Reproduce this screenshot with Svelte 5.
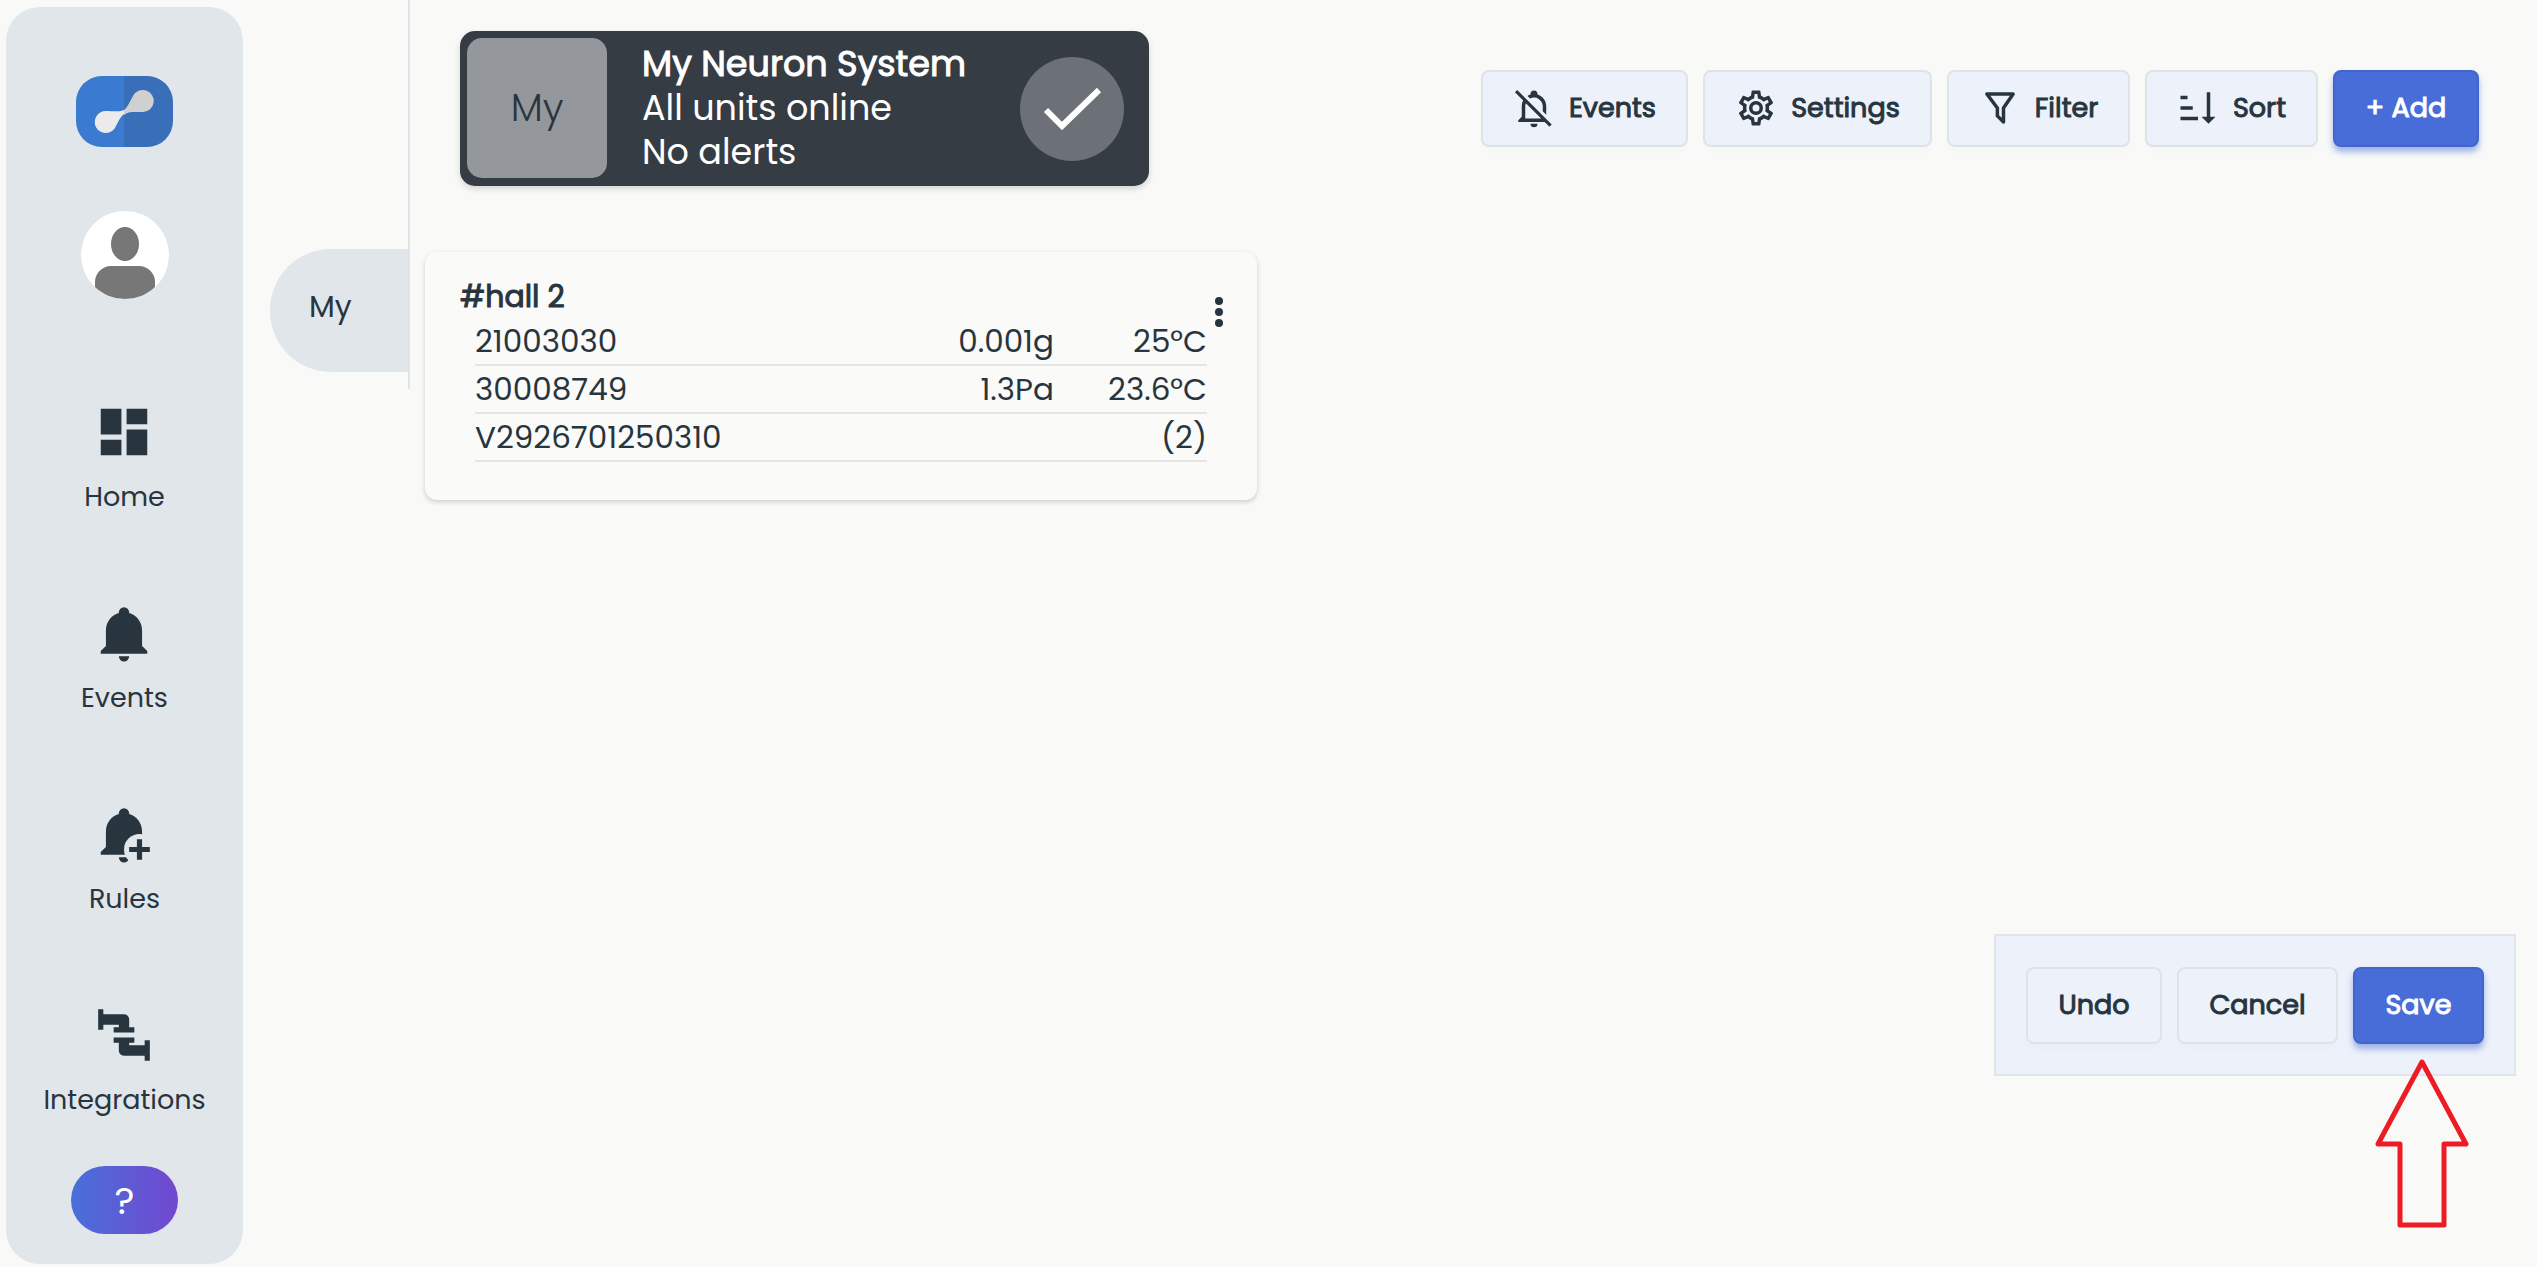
<script>
  const nav = [
    { id: 'home', label: 'Home' },
    { id: 'events', label: 'Events' },
    { id: 'rules', label: 'Rules' },
    { id: 'integrations', label: 'Integrations' }
  ];
  const units = [
    { id: '21003030', value: '0.001g', temp: '25°C' },
    { id: '30008749', value: '1.3Pa', temp: '23.6°C' },
    { id: 'V2926701250310', value: '', temp: '(2)' }
  ];
  const bell =
    'M21 19V20H3V19L5 17V11C5 7.9 7.03 5.17 10 4.29C10 4.19 10 4.1 10 4A2 2 0 0 1 12 2A2 2 0 0 1 14 4C14 4.1 14 4.19 14 4.29C16.97 5.17 19 7.9 19 11V17L21 19M14 21A2 2 0 0 1 12 23A2 2 0 0 1 10 21';
</script>

<div class="app">
  <aside class="sidebar">
    <a class="logo" href="#top" aria-label="Neuron">
      <svg viewBox="0 0 97 71">
        <defs><clipPath id="logo-shape"><rect width="97" height="71" rx="26" /></clipPath></defs>
        <g clip-path="url(#logo-shape)">
          <rect width="49" height="71" fill="#3a7ad0" />
          <rect x="48" width="49" height="71" fill="#396fb8" />
        </g>
        <path d="M48 34C44 36 38 35 30 35A11 11 0 1 0 39 52C42 46 44 41 48 38Z" fill="#ebebeb" />
        <path d="M48 34C52 31 54 25 57 20A11 11 0 1 1 67 36C58 36 52 35 48 39Z" fill="#d0d0d0" />
      </svg>
    </a>
    <button class="avatar" aria-label="Profile">
      <svg viewBox="0 0 88 88">
        <defs><clipPath id="face"><circle cx="44" cy="44" r="44" /></clipPath></defs>
        <g clip-path="url(#face)">
          <rect width="88" height="88" fill="#fff" />
          <ellipse cx="44" cy="33" rx="14" ry="17" fill="#777" />
          <rect x="14" y="55" width="60" height="46" rx="16" fill="#777" />
        </g>
      </svg>
    </button>
    <nav>
      {#each nav as item}
        <a href={'#' + item.id}>
          <svg viewBox="0 0 24 24" fill="currentColor" aria-hidden="true">
            {#if item.id === 'home'}
              <path d="M3 13h8V3H3v10zm0 8h8v-6H3v6zm10 0h8V11h-8v10zm0-18v6h8V3h-8z" />
            {:else if item.id === 'events'}
              <path d={bell} />
            {:else if item.id === 'rules'}
              <path d={bell} />
              <circle cx="18" cy="18" r="6" fill="#e0e6ea" />
              <path d="M17 14h2v3h3v2h-3v3h-2v-3h-3v-2h3z" />
            {:else}
              <path d="M16 9V11H8V9H10V8H4V10H2V2H4V4H12C13.11 4 14 4.9 14 6V9H16M10 15V18C10 19.11 10.9 20 12 20H20V22H22V14H20V16H14V15H16V13H8V15H10Z" />
            {/if}
          </svg>
          <span>{item.label}</span>
        </a>
      {/each}
    </nav>
    <button class="help">?</button>
  </aside>

  <div class="tabs"><a class="tab" href="#my">My</a></div>

  <main>
    <header>
      <section class="status">
        <div class="badge">My</div>
        <div class="lines">
          <strong>My Neuron System</strong>
          <span>All units online</span>
          <span>No alerts</span>
        </div>
        <svg class="ok" viewBox="0 0 105 105" aria-hidden="true">
          <circle cx="53" cy="53" r="52" fill="#6c7077" />
          <path d="M27 54L43 70L80 34" fill="none" stroke="#fff" stroke-width="6" />
        </svg>
      </section>
      <div class="toolbar">
        <button class="btn events">
          <svg viewBox="0 0 24 24" fill="currentColor" aria-hidden="true">
            <path d="M22.11 21.46L2.39 1.73L1.11 3L5.83 7.72C5.29 8.73 5 9.86 5 11V17L3 19V20H18.11L20.84 22.73L22.11 21.46M7 18V11C7 10.39 7.11 9.79 7.34 9.23L16.11 18H7M10 21H14A2 2 0 0 1 10 21M8.29 5.09C8.82 4.75 9.4 4.48 10 4.29V4A2 2 0 0 1 14 4V4.29C16.97 5.17 19 7.9 19 11V15.8L17 13.8V11A5 5 0 0 0 9.78 6.57L8.29 5.09Z" />
          </svg>
          Events
        </button>
        <button class="btn settings">
          <svg viewBox="0 0 24 24" fill="currentColor" aria-hidden="true">
            <path d="M12 8A4 4 0 1 1 12 16A4 4 0 1 1 12 8M12 10A2 2 0 1 0 12 14A2 2 0 1 0 12 10M10 22C9.75 22 9.54 21.82 9.5 21.58L9.13 18.93C8.5 18.68 7.96 18.34 7.44 17.94L4.95 18.95C4.73 19.03 4.46 18.95 4.34 18.73L2.34 15.27C2.21 15.05 2.27 14.78 2.46 14.63L4.57 12.97L4.5 12L4.57 11L2.46 9.37C2.27 9.22 2.21 8.95 2.34 8.73L4.34 5.27C4.46 5.05 4.73 4.96 4.95 5.05L7.44 6.05C7.96 5.66 8.5 5.32 9.13 5.07L9.5 2.42C9.54 2.18 9.75 2 10 2H14C14.25 2 14.46 2.18 14.5 2.42L14.87 5.07C15.5 5.32 16.04 5.66 16.56 6.05L19.05 5.05C19.27 4.96 19.54 5.05 19.66 5.27L21.66 8.73C21.79 8.95 21.73 9.22 21.54 9.37L19.43 11L19.5 12L19.43 13L21.54 14.63C21.73 14.78 21.79 15.05 21.66 15.27L19.66 18.73C19.54 18.95 19.27 19.04 19.05 18.95L16.56 17.95C16.04 18.34 15.5 18.68 14.87 18.93L14.5 21.58C14.46 21.82 14.25 22 14 22H10M11.25 4L10.88 6.61C9.68 6.86 8.62 7.5 7.85 8.39L5.44 7.35L4.69 8.65L6.8 10.2C6.4 11.37 6.4 12.64 6.8 13.8L4.68 15.36L5.43 16.66L7.86 15.62C8.63 16.5 9.68 17.14 10.87 17.38L11.24 20H12.76L13.13 17.39C14.32 17.14 15.37 16.5 16.14 15.62L18.57 16.66L19.32 15.36L17.2 13.81C17.6 12.64 17.6 11.37 17.2 10.2L19.31 8.65L18.56 7.35L16.15 8.39C15.38 7.5 14.32 6.86 13.12 6.62L12.75 4H11.25Z" />
          </svg>
          Settings
        </button>
        <button class="btn filter">
          <svg viewBox="0 0 24 24" fill="none" stroke="currentColor" stroke-width="2" aria-hidden="true">
            <path d="M4.5 4H19.500L14 12V20L10.500 16.500V12Z" stroke-linejoin="round" />
          </svg>
          Filter
        </button>
        <button class="btn sort">
          <svg viewBox="0 0 24 24" fill="currentColor" aria-hidden="true">
            <path d="M2 5h4v2H2zM2 11h7v2H2zM2 17h10v2H2zM17 3h2v14h3l-4 4l-4-4h3z" />
          </svg>
          Sort
        </button>
        <button class="btn primary add">+ Add</button>
      </div>
    </header>

    <section class="card">
      <h2>#hall 2</h2>
      <button class="more" aria-label="More">
        <svg viewBox="0 0 10 32" fill="currentColor">
          <circle cx="5" cy="5" r="4" /><circle cx="5" cy="16" r="4" /><circle cx="5" cy="27" r="4" />
        </svg>
      </button>
      <table>
        <tbody>
          {#each units as unit}
            <tr>
              <td>{unit.id}</td>
              <td class="num">{unit.value}</td>
              <td class="num temp">{unit.temp}</td>
            </tr>
          {/each}
        </tbody>
      </table>
    </section>

    <div class="actions">
      <button class="btn undo">Undo</button>
      <button class="btn cancel">Cancel</button>
      <button class="btn primary save">Save</button>
      <svg class="arrow" viewBox="0 0 94 170" aria-hidden="true">
        <path d="M47 4L91 86H69V167H25V86H3Z" fill="none" stroke="#ed1c24" stroke-width="5" stroke-linejoin="round" />
      </svg>
    </div>
  </main>
</div>

<style>
  :global(body) {
    margin: 0;
    background: #f9faf8;
  }
  * {
    box-sizing: border-box;
  }
  .app {
    display: flex;
    min-height: 100vh;
    color: #28353e;
    font-family: Poppins, Inter, sans-serif;
    font-size: 27px;
    font-weight: 400;
  }
  svg {
    display: block;
  }
  a {
    color: inherit;
    text-decoration: none;
  }
  button {
    font: inherit;
    color: inherit;
    cursor: pointer;
  }
  .sidebar {
    flex: none;
    width: 237px;
    margin: 7px 0 3px 6px;
    padding: 69px 0 30px;
    border-radius: 34px;
    background: #e0e6ea;
    display: flex;
    flex-direction: column;
    align-items: center;
  }
  .logo svg {
    width: 97px;
    height: 71px;
  }
  .avatar {
    margin-top: 64px;
    padding: 0;
    border: 0;
    background: none;
  }
  .avatar svg {
    width: 88px;
    height: 88px;
  }
  nav {
    margin-top: 102px;
    display: flex;
    flex-direction: column;
    gap: 69px;
  }
  nav a {
    display: flex;
    flex-direction: column;
    align-items: center;
    gap: 14px;
    height: 132px;
    line-height: 40px;
  }
  nav svg {
    width: 62px;
    height: 62px;
  }
  .help {
    margin-top: auto;
    width: 107px;
    height: 68px;
    padding: 0;
    border: 0;
    border-radius: 34px;
    background: linear-gradient(90deg, #4870da, #7247d0);
    color: #fff;
    font-size: 38px;
  }
  .tabs {
    flex: none;
    width: 140px;
    height: 389px;
    margin-left: 27px;
    padding-top: 249px;
    border-right: 2px solid #e0e5ea;
  }
  .tab {
    display: flex;
    align-items: center;
    height: 123px;
    padding: 0 0 8px 39px;
    border-radius: 61px 0 0 61px;
    background: #e0e6ea;
    font-size: 30px;
  }
  main {
    flex: 1;
    display: flex;
    flex-direction: column;
    padding: 31px 21px 191px 15px;
  }
  header {
    display: flex;
    justify-content: space-between;
    align-items: center;
    padding: 0 37px 0 35px;
  }
  .status {
    display: flex;
    align-items: center;
    width: 689px;
    height: 155px;
    padding: 0 25px 1px 7px;
    border-radius: 15px;
    background: #353c44;
    box-shadow: 0 3px 6px rgba(0, 0, 0, 0.15);
    color: #fff;
    font-size: 35px;
    line-height: 44px;
  }
  .badge {
    display: flex;
    align-items: center;
    justify-content: center;
    width: 140px;
    height: 140px;
    border-radius: 15px;
    background: #94979b;
    color: #28353e;
    font-size: 38px;
    font-weight: 300;
  }
  .lines {
    flex: 1;
    display: flex;
    flex-direction: column;
    padding-left: 35px;
    white-space: nowrap;
  }
  .lines strong,
  h2,
  .btn {
    font-weight: 400;
    -webkit-text-stroke: 1px currentColor;
  }
  .ok {
    width: 105px;
    height: 105px;
  }
  .toolbar {
    display: flex;
    gap: 15px;
  }
  .btn {
    display: flex;
    align-items: center;
    justify-content: center;
    gap: 14px;
    height: 77px;
    padding: 0 0 2px;
    border: 2px solid #dde3e8;
    border-radius: 8px;
    background: #edf2fa;
    box-shadow: 0 6px 6px rgba(0, 0, 0, 0.01);
    white-space: nowrap;
  }
  .btn svg {
    width: 42px;
    height: 42px;
  }
  .events { width: 207px; }
  .settings { width: 229px; }
  .filter { width: 183px; }
  .sort { width: 173px; }
  .add { width: 146px; }
  .undo { width: 136px; }
  .cancel { width: 161px; }
  .save { width: 131px; }
  .primary {
    border-color: #4464cc;
    background: #486dd8;
    box-shadow: 0 5px 6px rgba(72, 109, 216, 0.5);
    color: #fff;
  }
  .card {
    position: relative;
    width: 832px;
    margin-top: 66px;
    padding: 23px 50px 38px;
    border-radius: 12px;
    background: #fafaf9;
    box-shadow: 0 2px 5px rgba(0, 0, 0, 0.18);
    font-size: 31px;
  }
  h2 {
    margin: 0 0 0 -15px;
    font-size: 30px;
    line-height: 43px;
  }
  .more {
    position: absolute;
    top: 44px;
    right: 33px;
    padding: 0;
    border: 0;
    background: none;
  }
  .more svg {
    width: 10px;
    height: 32px;
  }
  table {
    width: 100%;
    border-collapse: collapse;
    line-height: 46px;
  }
  td {
    padding: 0;
    border-bottom: 2px solid #e4e5e4;
  }
  .num {
    text-align: right;
  }
  .temp {
    width: 153px;
  }
  .actions {
    position: relative;
    display: flex;
    gap: 15px;
    align-self: flex-end;
    margin-top: auto;
    padding: 31px 30px 30px;
    border: 2px solid #e0e5ec;
    background: #edf2fa;
  }
  .arrow {
    position: absolute;
    top: 122px;
    right: 45px;
    width: 94px;
    height: 170px;
  }
</style>
